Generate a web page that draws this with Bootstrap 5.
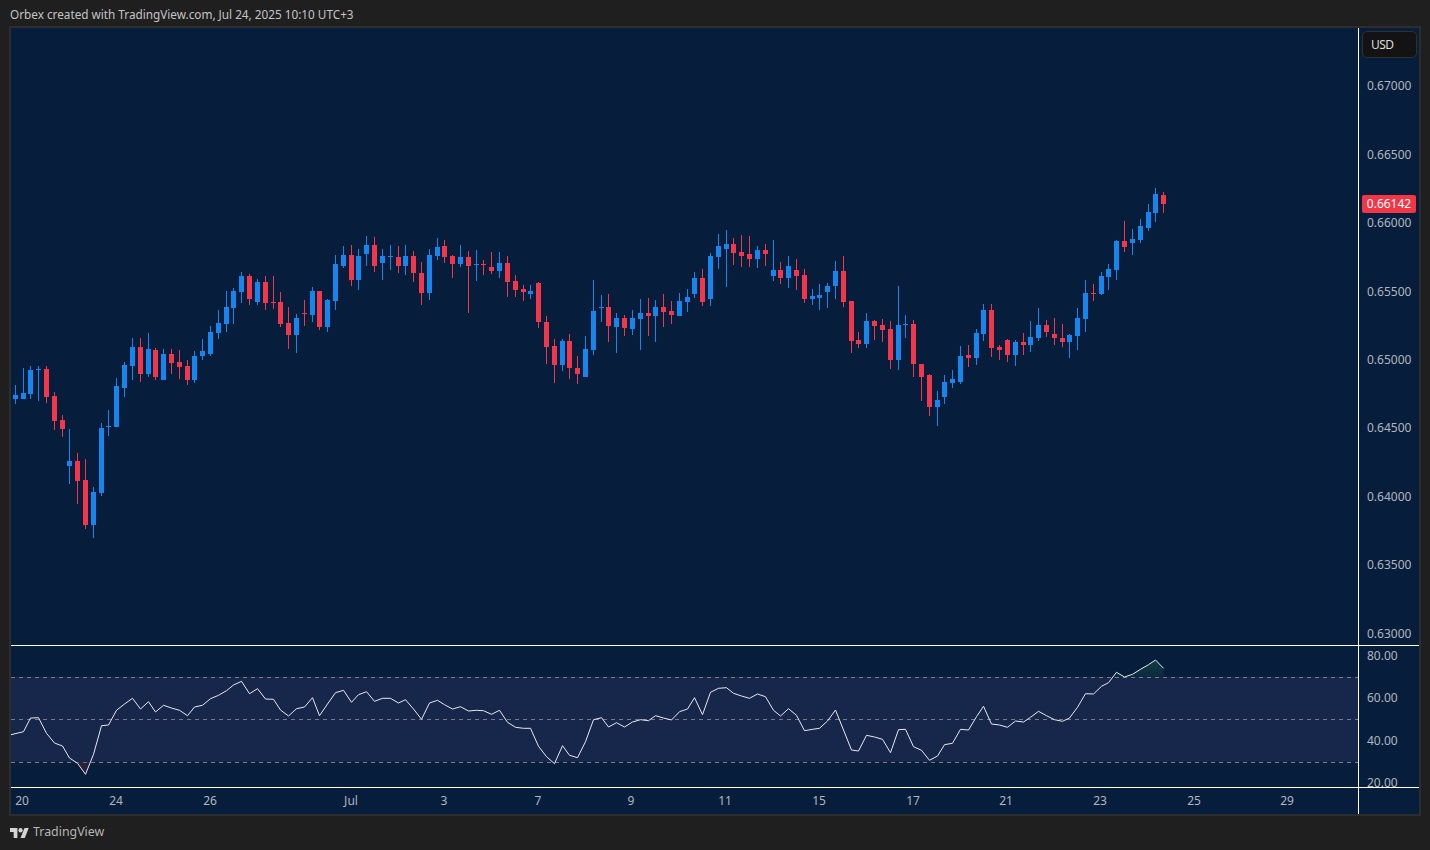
<!DOCTYPE html>
<html lang="en">
<head>
<meta charset="utf-8">
<title>Orbex chart</title>
<link href="https://cdn.jsdelivr.net/npm/bootstrap@5.3.0/dist/css/bootstrap.min.css" rel="stylesheet">
<style>
html,body{height:100%;overflow:hidden}
body{background:#1f1f1f;font-family:"Noto Sans","Liberation Sans",sans-serif;color:#b2b5be}
.shot{width:1430px;height:850px}
.cap{height:26px;padding-left:10px;font-size:11.75px;line-height:28px;color:#c4c4c4;white-space:nowrap}
.frame{margin-left:9px;width:1412px;height:790px;border:2px solid #2b2d2f;background:#061e3b}
.pane-price{height:618px;border-bottom:1px solid #fff}
.pane-rsi{height:142px;border-bottom:1px solid #fff}
.pane-time{height:26px}
.plot{width:1348px;border-right:1px solid #fff;flex:none;overflow:hidden}
.plot svg{display:block}
.scale{width:60px;flex:none;font-size:12px;color:#b2b5be}
.scale-price{padding-top:48.1px}
.tick-p{height:68.47px;line-height:20px;padding-left:8px}
.scale-rsi{padding-top:2px}
.tick-r{height:42.3px;line-height:16px;padding-left:8px}
.tick-r:last-child{height:16px}
.tick-t{position:absolute;top:4px;transform:translateX(-50%);font-size:12px;line-height:18px;color:#b2b5be}
.tick-jul{margin-left:1px}
.cur-btn{position:absolute;left:3px;top:3px;width:55px;height:27px;background:#131313;border:1px solid #303030;border-radius:5px;font-size:12px;letter-spacing:-.6px;line-height:25px;padding-left:8px;color:#dcdcdc}
.cur-tag{position:absolute;left:3px;top:167px;width:54px;height:18px;background:#f23645;border-radius:2px;color:#fff;font-size:12px;line-height:18px;text-align:center}
.brand{height:34px;padding-left:10px;padding-bottom:1px;gap:4px;font-size:12.4px;color:#b5b5b5}
.brand svg{width:19px;height:10px;flex:none}
</style>
</head>
<body>
<div class="shot d-flex flex-column">
  <div class="cap">Orbex created with TradingView.com, Jul 24, 2025 10:10 UTC+3</div>
  <div class="frame d-flex flex-column">
    <div class="pane-price d-flex">
      <div class="plot"><svg id="priceSvg" width="1347" height="617" viewBox="11 28 1347 617" xmlns="http://www.w3.org/2000/svg"></svg></div>
      <div class="scale scale-price position-relative">
        <div class="cur-btn">USD</div>
        <div class="tick-p">0.67000</div>
        <div class="tick-p">0.66500</div>
        <div class="tick-p">0.66000</div>
        <div class="tick-p">0.65500</div>
        <div class="tick-p">0.65000</div>
        <div class="tick-p">0.64500</div>
        <div class="tick-p">0.64000</div>
        <div class="tick-p">0.63500</div>
        <div class="tick-p">0.63000</div>
        <div class="cur-tag">0.66142</div>
      </div>
    </div>
    <div class="pane-rsi d-flex">
      <div class="plot"><svg id="rsiSvg" width="1347" height="141" viewBox="11 646 1347 141" xmlns="http://www.w3.org/2000/svg"></svg></div>
      <div class="scale scale-rsi">
        <div class="tick-r">80.00</div>
        <div class="tick-r">60.00</div>
        <div class="tick-r">40.00</div>
        <div class="tick-r">20.00</div>
      </div>
    </div>
    <div class="pane-time d-flex">
      <div class="plot position-relative" id="timeAxis">
        <span class="tick-t" style="left:11px">20</span>
        <span class="tick-t" style="left:105px">24</span>
        <span class="tick-t" style="left:199px">26</span>
        <span class="tick-t tick-jul" style="left:339px">Jul</span>
        <span class="tick-t" style="left:433px">3</span>
        <span class="tick-t" style="left:527px">7</span>
        <span class="tick-t" style="left:620px">9</span>
        <span class="tick-t" style="left:714px">11</span>
        <span class="tick-t" style="left:808px">15</span>
        <span class="tick-t" style="left:902px">17</span>
        <span class="tick-t" style="left:995px">21</span>
        <span class="tick-t" style="left:1089px">23</span>
        <span class="tick-t" style="left:1183px">25</span>
        <span class="tick-t" style="left:1276px">29</span>
      </div>
      <div class="scale"></div>
    </div>
  </div>
  <div class="brand d-flex align-items-center">
    <svg viewBox="0 4 36 18" preserveAspectRatio="none" xmlns="http://www.w3.org/2000/svg" fill="#d4d4d4"><path d="M14 22H7V11H0V4h14v18zM28 22h-8l7.5-18h8L28 22z"/><circle cx="20" cy="8" r="4"/></svg>
    <span>TradingView</span>
  </div>
</div>
<script src="https://cdn.jsdelivr.net/npm/bootstrap@5.3.0/dist/js/bootstrap.bundle.min.js"></script>
<script>
// wick top, body top, body bottom, wick bottom, colour (1 = up blue, 0 = down red)
var C=[
[385,395,399,404,1],[368,393,399,399,1],[366,370,394,399,1],[366,369,370,401,1],[366,369,397,403,0],[392,396,421,430,0],[415,420,429,437,0],
[429,461,466,484,1],[453,461,481,504,0],[459,480,525,529,0],[487,492,525,538,1],[423,428,493,496,1],[410,426,427,436,1],[378,386,427,427,1],
[362,365,388,397,1],[338,347,366,380,1],[338,347,374,382,0],[333,349,374,377,1],[348,350,377,380,0],[349,354,380,380,1],[349,354,363,374,0],
[350,362,367,379,0],[360,366,380,385,0],[351,356,380,383,1],[339,351,356,360,1],[326,332,354,356,1],[310,323,333,339,1],[291,307,324,332,1],
[288,291,308,324,1],[272,276,292,303,1],[274,276,299,305,0],[279,282,302,305,1],[276,282,303,310,0],[276,302,303,309,0],[292,302,324,327,0],
[307,323,335,349,0],[314,318,335,353,1],[300,313,314,326,0],[287,291,315,322,1],[291,291,327,330,0],[299,300,327,332,1],[255,264,301,310,1],
[246,255,266,268,1],[245,255,280,286,0],[249,256,280,290,1],[236,245,254,266,1],[237,245,266,272,0],[249,256,263,280,1],[245,256,257,270,1],
[246,257,266,273,0],[245,256,266,275,1],[251,256,273,282,0],[262,273,293,305,0],[249,255,293,300,1],[238,247,256,260,1],[240,246,257,263,0],
[255,256,264,278,0],[245,257,264,267,1],[251,257,266,313,0],[250,264,265,281,1],[260,264,265,275,0],[252,267,271,274,0],[252,263,271,278,1],
[256,263,282,297,0],[275,281,290,297,0],[285,289,292,301,0],[285,291,294,299,1],[282,283,322,328,0],[316,322,347,364,0],[339,346,365,383,0],
[339,341,365,371,1],[334,341,368,379,0],[356,368,374,384,0],[336,349,377,377,1],[280,311,350,355,1],[295,307,308,322,1],[294,307,326,342,0],
[313,318,327,353,1],[315,318,328,336,0],[310,318,329,335,1],[299,313,319,350,1],[298,313,316,336,0],[300,307,316,342,1],[294,307,312,327,0],
[301,311,315,324,0],[293,301,316,316,1],[289,297,302,312,1],[272,278,294,298,1],[269,278,302,306,0],[253,256,299,306,1],[234,246,257,269,1],
[230,244,249,287,1],[238,244,253,265,0],[235,252,256,267,0],[236,254,259,267,0],[246,250,259,268,1],[244,250,254,266,0],[240,270,276,281,1],
[262,270,278,284,0],[256,266,278,288,1],[259,270,276,290,0],[269,275,299,303,0],[289,296,299,305,1],[284,295,298,310,1],[283,286,292,308,1],
[261,271,286,299,1],[256,271,302,307,0],[301,301,341,353,0],[332,340,344,348,0],[313,321,344,348,1],[320,321,326,340,0],[319,325,330,342,0],
[321,329,360,369,0],[286,325,360,370,1],[315,324,325,338,1],[320,324,364,377,0],[364,364,377,401,0],[374,375,407,416,0],[391,400,407,426,1],
[375,382,397,404,1],[370,379,383,388,1],[346,356,382,384,1],[345,355,358,367,0],[329,333,358,365,1],[304,310,334,341,1],[304,310,348,357,0],
[345,347,350,360,0],[339,340,355,362,0],[340,342,355,366,1],[333,342,345,355,0],[321,337,345,352,1],[308,325,338,341,1],[320,325,332,337,0],
[318,334,338,345,0],[324,338,342,347,0],[334,335,342,358,1],[308,318,336,350,1],[280,293,319,332,1],[284,293,294,301,0],[272,276,294,295,1],
[264,269,277,290,1],[240,241,270,280,1],[221,241,247,252,0],[229,239,243,255,1],[219,226,240,243,1],[204,212,228,231,1],[188,194,213,222,1],[192,195,204,213,0]
];
// RSI, in zoomed pixels (3 × offset from y = 640)
var R=[275,234,233,280,309,318,354,370,403,343,257,255,211,192,175,207,185,216,196,204,211,227,201,196,176,166,152,135,124,161,146,177,178,210,228,206,201,173,227,192,158,151,187,164,155,184,175,175,189,179,207,238,189,181,194,207,200,213,211,
212,223,211,247,262,265,265,319,350,371,317,346,353,305,239,233,261,248,261,246,239,242,227,234,240,215,207,173,224,157,145,143,160,168,175,162,170,211,228,206,226,272,268,265,243,210,270,330,333,286,291,298,338,269,268,320,331,361,348,314,310,268,270,230,199,252,255,262,243,246,232,214,227,239,244,234,202,161,162,139,128,97,111,103,88,74,60,85];
var BLUE='#1685ee',RED='#f4364a';
function cx(i){return Math.floor(15.2+7.8125*i)}
var s='';
C.forEach(function(c,i){
  var x=cx(i),col=c[4]?BLUE:RED;
  s+='<rect x="'+x+'" y="'+c[0]+'" width="1" height="'+(c[3]-c[0])+'" fill="'+col+'"/>';
  s+='<rect x="'+(x-2)+'" y="'+c[1]+'" width="5" height="'+(c[2]-c[1])+'" fill="'+col+'"/>';
});
var ps=document.getElementById('priceSvg');
ps.setAttribute('shape-rendering','crispEdges');
ps.innerHTML=s;
var pts=R.map(function(v,i){return [cx(i+1)+.5,640+v/3]});
pts.unshift([11,734.7]);
var line=pts.map(function(p){return p[0]+','+p[1].toFixed(1)}).join(' ');
function seg(a,b,y){return pts.slice(a,b+1).map(function(p){return p[0]+','+p[1].toFixed(1)}).join(' ')+' '+pts[b][0]+','+y+' '+pts[a][0]+','+y}
var r='<defs><linearGradient id="ob" x1="0" y1="0" x2="0" y2="1"><stop offset="0" stop-color="#1f6b4e" stop-opacity=".4"/><stop offset="1" stop-color="#1f6b4e" stop-opacity=".02"/></linearGradient>'+
 '<clipPath id="obc"><rect x="11" y="646" width="1347" height="31"/></clipPath><clipPath id="osc"><rect x="11" y="762" width="1347" height="25"/></clipPath></defs>';
r+='<rect x="11" y="677" width="1347" height="85" fill="#17264b"/>';
[677.5,719.5,762.5].forEach(function(y){r+='<line x1="11" x2="1358" y1="'+y+'" y2="'+y+'" stroke="#787b86" stroke-width="1" stroke-dasharray="4 4"/>'});
r+='<polygon points="'+seg(139,147,677)+'" fill="url(#ob)" clip-path="url(#obc)"/>';
r+='<polygon points="'+seg(7,11,762)+'" fill="#7a2a3a" fill-opacity=".3" clip-path="url(#osc)"/>';
r+='<polyline points="'+line+'" fill="none" stroke="#e9e9ec" stroke-width="1"/>';
document.getElementById('rsiSvg').innerHTML=r;
</script>
</body>
</html>
